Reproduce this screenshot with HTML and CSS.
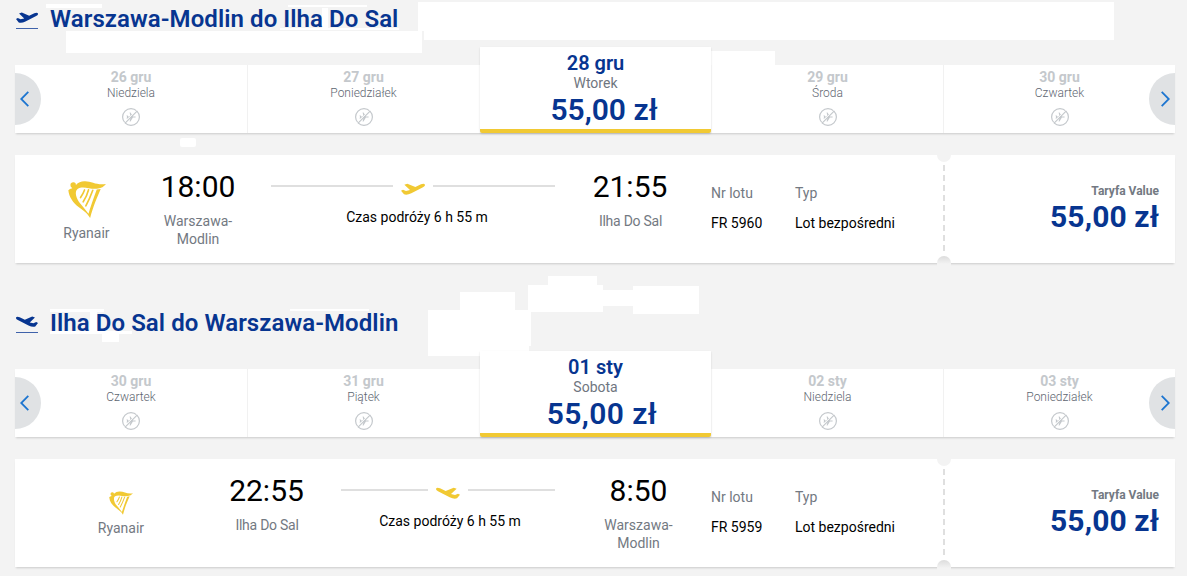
FILE: index.html
```
<!DOCTYPE html>
<html lang="pl">
<head>
    <meta charset="UTF-8">
    <meta name="viewport" content="width=device-width, initial-scale=1.0">
    <title>Ryanair</title>
    <link rel="stylesheet" href="styles.css">
</head>
<body>
    <!-- icons used more than once -->
    <svg class="sprite" aria-hidden="true">
        <symbol id="plane" viewBox="0 0 72 36">
            <path d="M0 23 L6 20 L15 24 L27 21 L10 5 L19 2 L43 12 L60 4 Q69 0 72 5 Q73 9 66 13 L31 31 Q18 37 9 34 Z"/>
        </symbol>
        <symbol id="no-flight" viewBox="0 0 18 18">
            <circle cx="9" cy="9" r="8.4" fill="none" stroke="currentColor" stroke-width="1.2"/>
            <path fill="currentColor" d="M4.6 7.2h.7l.9 1.2h2.4L7.6 4.6h.9l2.4 3.8h2.4q1.2.6 0 1.2h-2.4l-2.4 3.8h-.9l1-3.8H6.2l-.9 1.2h-.7l.4-1.8z"/>
            <path d="M2.5 14.5 L14.5 2.5" stroke="#fff" stroke-width="1"/>
            <path d="M3.1 15.1 L15.1 3.1" stroke="currentColor" stroke-width="1.1"/>
        </symbol>
        <symbol id="harp" viewBox="0 0 115 112">
            <path d="M8 17 Q5 5 15 4 Q24 3 24 12 Q35 0 52 1 C72 2 89 14 115 9 Q105 21 91 23 C68 27 46 13 29 24 C18 32 26 55 37 68 Q49 82 62 99 Q70 72 87 26 L99 24 C89 48 76 76 67 112 C58 96 45 89 31 78 C16 66 3 49 1 28 Q5 24 13 22 Z"/>
            <path fill="none" stroke="currentColor" stroke-width="5" stroke-linecap="round" d="M50 27 Q46 38 38 50 M62 27 Q57 46 46 63 M75 28 Q66 53 54 75"/>
        </symbol>
        <symbol id="chevron" viewBox="0 0 9 16">
            <path fill="none" stroke="currentColor" stroke-width="1.8" d="M8.3 .8 L1.2 8 L8.3 15.2"/>
        </symbol>
    </svg>

    <!-- blank areas behind the content -->
    <svg class="blanks" width="1187" height="576" aria-hidden="true">
        <rect x="46" y="4" width="56" height="4"/>
        <rect x="288" y="5" width="79" height="2"/>
        <rect x="322" y="8" width="6" height="20"/>
        <rect x="280" y="28" width="119" height="2"/>
        <rect x="66" y="31" width="356" height="22"/>
        <rect x="418" y="2" width="696" height="29"/>
        <rect x="424" y="31" width="690" height="9"/>
        <rect x="711" y="51" width="64" height="14"/>
        <rect x="180" y="138" width="16" height="9" rx="2"/>
        <rect x="50" y="309" width="54" height="3"/>
        <rect x="290" y="309" width="79" height="2"/>
        <rect x="90" y="312" width="7" height="20"/>
        <rect x="50" y="331" width="82" height="3"/>
        <rect x="102" y="334" width="17" height="8"/>
        <rect x="460" y="292" width="55" height="18"/>
        <rect x="428" y="310" width="103" height="36"/>
        <rect x="428" y="346" width="101" height="10"/>
        <rect x="548" y="276" width="49" height="9"/>
        <rect x="528" y="285" width="75" height="27"/>
        <rect x="603" y="290" width="30" height="16"/>
        <rect x="633" y="286" width="66" height="28"/>
    </svg>

    <main>
        <section class="flight outbound">
            <h2>
                <span class="title-icon"><svg class="plane"><use href="#plane"/></svg></span>
                <span class="title">Warszawa-Modlin do Ilha Do Sal</span>
            </h2>
            <div class="carousel">
                <div class="day"><b>26 gru</b><span>Niedziela</span><svg><use href="#no-flight"/></svg></div>
                <div class="day"><b>27 gru</b><span>Poniedziałek</span><svg><use href="#no-flight"/></svg></div>
                <div class="day active"><b>28 gru</b><span>Wtorek</span><strong>55,00 zł</strong></div>
                <div class="day"><b>29 gru</b><span>Środa</span><svg><use href="#no-flight"/></svg></div>
                <div class="day"><b>30 gru</b><span>Czwartek</span><svg><use href="#no-flight"/></svg></div>
                <button class="arrow prev" aria-label="Wstecz"><svg><use href="#chevron"/></svg></button>
                <button class="arrow next" aria-label="Dalej"><svg><use href="#chevron"/></svg></button>
            </div>
            <div class="card">
                <div class="brand"><svg><use href="#harp"/></svg><span>Ryanair</span></div>
                <div class="stop"><time>18:00</time><p>Warszawa-<br>Modlin</p></div>
                <div class="route">
                    <div class="line"><svg class="plane"><use href="#plane"/></svg></div>
                    <p>Czas podróży 6 h 55 m</p>
                </div>
                <div class="stop"><time>21:55</time><p class="island">Ilha Do Sal</p></div>
                <div class="info number"><span>Nr lotu</span><p>FR 5960</p></div>
                <div class="info"><span>Typ</span><p>Lot bezpośredni</p></div>
                <div class="fare"><span>Taryfa Value</span><strong>55,00 zł</strong></div>
            </div>
        </section>

        <section class="flight return">
            <h2>
                <span class="title-icon"><svg class="plane"><use href="#plane"/></svg></span>
                <span class="title">Ilha Do Sal do Warszawa-Modlin</span>
            </h2>
            <div class="carousel">
                <div class="day"><b>30 gru</b><span>Czwartek</span><svg><use href="#no-flight"/></svg></div>
                <div class="day"><b>31 gru</b><span>Piątek</span><svg><use href="#no-flight"/></svg></div>
                <div class="day active"><b>01 sty</b><span>Sobota</span><strong>55,00 zł</strong></div>
                <div class="day"><b>02 sty</b><span>Niedziela</span><svg><use href="#no-flight"/></svg></div>
                <div class="day"><b>03 sty</b><span>Poniedziałek</span><svg><use href="#no-flight"/></svg></div>
                <button class="arrow prev" aria-label="Wstecz"><svg><use href="#chevron"/></svg></button>
                <button class="arrow next" aria-label="Dalej"><svg><use href="#chevron"/></svg></button>
            </div>
            <div class="card">
                <div class="brand"><svg><use href="#harp"/></svg><span>Ryanair</span></div>
                <div class="stop"><time>22:55</time><p class="island">Ilha Do Sal</p></div>
                <div class="route">
                    <div class="line"><svg class="plane"><use href="#plane"/></svg></div>
                    <p>Czas podróży 6 h 55 m</p>
                </div>
                <div class="stop"><time>8:50</time><p>Warszawa-<br>Modlin</p></div>
                <div class="info number"><span>Nr lotu</span><p>FR 5959</p></div>
                <div class="info"><span>Typ</span><p>Lot bezpośredni</p></div>
                <div class="fare"><span>Taryfa Value</span><strong>55,00 zł</strong></div>
            </div>
        </section>
    </main>
</body>
</html>
```
FILE: styles.css
```
*{
    box-sizing: border-box;
}
body{
    margin: 0;
    background: #f3f3f3;
    font-family: Roboto, "Liberation Sans", sans-serif;
    font-size: 14px;
    color: #000;
}
p{
    margin: 0;
}
.sprite{
    position: absolute;
    width: 0;
    height: 0;
}
.blanks{
    position: absolute;
    top: 0;
    left: 0;
    fill: #fff;
}
main{
    position: relative;
    width: 1160px;
    margin-left: 15px;
}
.flight{
    height: 304px;
}
.flight.return{
    height: 272px;
}
h2{
    display: flex;
    align-items: center;
    gap: 12px;
    height: 38px;
    margin: 0 0 27px;
    font-size: 24px;
    font-weight: 600;
    line-height: 28px;
    letter-spacing: 0.07px;
    color: #073590;
    white-space: nowrap;
}
.title-icon{
    width: 22px;
    height: 17px;
    margin: 3px 0 0 1px;
    border-bottom: 1px solid #3f62aa;
    display: flex;
}
.title-icon svg{
    width: 22px;
    height: 11px;
    fill: #073590;
}
.return .plane{
    transform: scaleX(-1);
}

/* dates */
.carousel{
    position: relative;
    display: grid;
    grid-template-columns: repeat(5, 232px);
    grid-template-rows: 68px;
    align-items: end;
    height: 68px;
    background: #fff;
    box-shadow: 0 2px 2px -1px rgba(0, 0, 0, 0.17);
}
.day{
    display: flex;
    flex-direction: column;
    align-items: center;
    height: 68px;
    padding-top: 4px;
    border-left: 1px solid #f1f1f1;
    color: #c4c8cc;
}
.day:first-child{
    border-left: none;
}
.day b{
    font-size: 14px;
    line-height: 16px;
}
.day span{
    font-size: 12px;
    font-weight: 300;
    line-height: 16px;
    color: #5e6671;
}
.day svg{
    width: 18px;
    height: 18px;
    margin-top: 7px;
}
.day.active{
    height: 86px;
    margin-left: 1px;
    background: #fff;
    border-left: none;
    border-bottom: 4px solid #f1c933;
    border-radius: 0 0 2px 2px;
    box-shadow: 0 1px 2px rgba(0, 0, 0, 0.15);
    color: #073590;
}
.day.active b{
    font-size: 20px;
    font-weight: 600;
    line-height: 24px;
}
.day.active span{
    font-size: 14px;
    font-weight: 400;
    color: #6f7680;
}
.day.active strong{
    font-size: 30px;
    font-weight: 600;
    line-height: 38px;
    padding-left: 17px;
}
.return .day.active strong{
    padding-left: 13px;
    letter-spacing: 0.4px;
}
.arrow{
    position: absolute;
    top: 8px;
    width: 26px;
    height: 52px;
    padding: 0;
    border: none;
    background: #e0e2e4;
    color: #1d75d0;
    cursor: pointer;
}
.arrow svg{
    display: block;
    width: 9px;
    height: 16px;
}
.prev{
    left: 0;
    padding-left: 5px;
    border-radius: 0 26px 26px 0;
}
.next{
    right: 0;
    padding-left: 12px;
    border-radius: 26px 0 0 26px;
}
.next svg{
    transform: scaleX(-1);
}

/* flight card */
.card{
    display: grid;
    grid-template-columns: 143px 80px 350px 84px 123px 148px 232px;
    height: 108px;
    margin-top: 22px;
    background: #fff;
    box-shadow: 0 2px 2px -1px rgba(0, 0, 0, 0.17);
}
.return .card{
    grid-template-columns: 212px 79px 284px 97px 108px 148px 232px;
}
.brand{
    display: flex;
    flex-direction: column;
    align-items: center;
    padding-top: 26px;
    line-height: 16px;
    color: #737982;
}
.brand svg{
    width: 38px;
    height: 37px;
    margin-bottom: 7px;
    fill: #f1c933;
    color: #f1c933;
}
.return .brand{
    padding-top: 32px;
}
.return .brand svg{
    width: 24px;
    height: 24px;
    margin-bottom: 5px;
}
.stop{
    padding-top: 14px;
    text-align: center;
    line-height: 18px;
    color: #737982;
}
.stop time{
    display: block;
    margin-bottom: 7px;
    font-size: 30px;
    line-height: 36px;
    color: #000;
}
.island{
    padding-left: 1px;
    letter-spacing: -0.25px;
}
.route{
    padding: 28px 33px 0;
    text-align: center;
}
.return .route{
    padding: 28px 35px 0;
}
.route p{
    padding: 14px 0 0 8px;
    line-height: 16px;
}
.return .route p{
    padding-left: 4px;
}
.line{
    display: flex;
    gap: 8px;
    height: 12px;
}
.line::before,
.line::after{
    content: "";
    flex: 1;
    height: 2px;
    margin-top: 2px;
    background: #dfdfdf;
}
.line svg{
    width: 24px;
    height: 12px;
    fill: #f1c933;
}
.info{
    padding-top: 30px;
    line-height: 16px;
}
.info.number{
    padding-left: 39px;
}
.return .info.number{
    padding-left: 24px;
}
.info span{
    display: block;
    margin-bottom: 14px;
    color: #737982;
}
.fare{
    position: relative;
    display: flex;
    flex-direction: column;
    align-items: flex-end;
    padding: 28px 16px 0 0;
    background: repeating-linear-gradient(#dfdfdf 0 6px, transparent 6px 10px) 0 10px / 2px 88px no-repeat;
}
/* ticket cut-outs */
.fare::before,
.fare::after{
    content: "";
    position: absolute;
    left: -6px;
    width: 14px;
    height: 7px;
    background: #f3f3f3;
}
.fare::before{
    top: 0;
    border-radius: 0 0 7px 7px;
}
.fare::after{
    bottom: -4px;
    height: 11px;
    border-radius: 7px 7px 0 0;
    background: linear-gradient(#dcdcdc, #f3f3f3 8px);
}
.fare span{
    font-size: 12px;
    font-weight: 700;
    line-height: 16px;
    color: #737982;
}
.fare strong{
    font-size: 30px;
    font-weight: 700;
    line-height: 36px;
    letter-spacing: 0.1px;
    color: #073590;
}
```
